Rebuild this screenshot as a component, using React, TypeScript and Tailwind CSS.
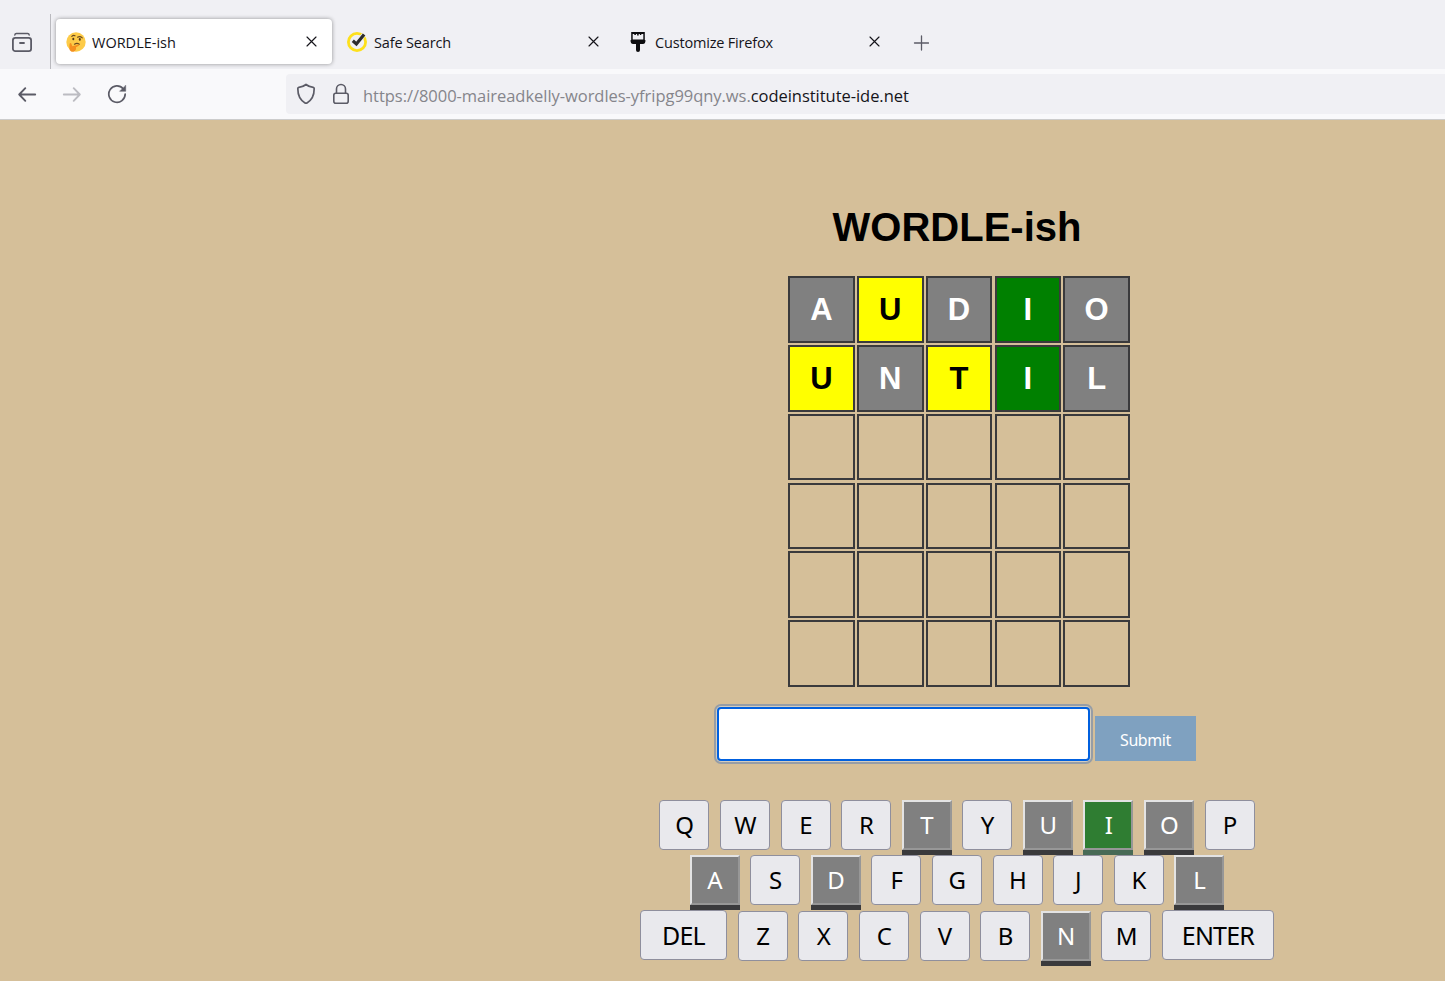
import React from "react";

type Mark = "miss" | "near" | "hit" | "empty";

const rows: [string, Mark][][] = [
  [["A", "miss"], ["U", "near"], ["D", "miss"], ["I", "hit"], ["O", "miss"]],
  [["U", "near"], ["N", "miss"], ["T", "near"], ["I", "hit"], ["L", "miss"]],
  ...Array.from({ length: 4 }, () => Array.from({ length: 5 }, () => ["", "empty"] as [string, Mark])),
];

const tileStyle: Record<Mark, string> = {
  miss: "bg-[#808080] text-white",
  near: "bg-[#ffff00] text-black",
  hit: "bg-[#008000] text-white",
  empty: "",
};

const used = new Set(["T", "U", "O", "A", "D", "L", "N"]);

function Key({ k }: { k: string }) {
  const base = "flex h-[50px] w-[50px] shrink-0 items-center justify-center text-[24px] leading-none font-['Noto_Sans',sans-serif] pl-[0.6px] ";
  if (k === "I")
    return (
      <button className={base + "border-2 border-t-[#e3e3e3] border-l-[#e3e3e3] border-r-[#979797] border-b-[#979797] bg-[#2f7d32] text-white shadow-[0_5px_0_#486a56]"}>
        <span>I</span>
      </button>
    );
  if (used.has(k))
    return (
      <button className={base + "border-2 border-t-[#e3e3e3] border-l-[#e3e3e3] border-r-[#979797] border-b-[#979797] bg-[#808080] text-white shadow-[0_5px_0_#3a3a3c]"}>
        <span>{k}</span>
      </button>
    );
  return (
    <button className={base + "rounded-[4px] border border-[#8f8f9d] bg-[#e9e9ed] text-black"}>
      <span>{k}</span>
    </button>
  );
}

function Close() {
  return (
    <svg width="12" height="12" viewBox="0 0 12 12" className="shrink-0" fill="none" stroke="#15141a" strokeWidth="1.15" strokeLinecap="round">
      <path d="M2 1l9 9M11 1l-9 9" />
    </svg>
  );
}

function Browser() {
  return (
    <header className="font-['Open_Sans','Noto_Sans',sans-serif] text-[#15141a]">
      <div className="flex h-[69px] bg-[#f0f0f4]">
        <div className="mt-[14px] flex h-[55px] w-[51px] border-r border-[#b9b9be] pl-[11px] pt-[18px]">
          <svg width="22" height="22" viewBox="0 0 22 22" fill="none" stroke="#5b5b66" strokeWidth="1.8" strokeLinecap="round">
            <path d="M3.8 3Q4 1.6 5.4 1.6h11.2Q18 1.6 18.2 3" strokeWidth="1.5" />
            <rect x="1.9" y="5.9" width="18.2" height="13.2" rx="2.4" />
            <path d="M9 11h4" />
          </svg>
        </div>
        <div className="ml-[5px] mt-[19px] flex h-[45px] w-[276px] items-center rounded-[4px] bg-white pl-[10px] pr-[15px] shadow-[0_0_4px_rgba(0,0,0,0.4)]">
          <svg width="20" height="20" viewBox="0 0 20 20" className="shrink-0">
            <circle cx="10" cy="10" r="9.7" fill="#fdcb48" />
            <path d="M5.8 4.4Q7.5 2.8 9 3.8M11.5 5.2Q14 3.9 16.3 5.8" fill="none" stroke="#6b4a20" strokeWidth="1.1" strokeLinecap="round" />
            <ellipse cx="7.3" cy="7" rx="1" ry="1.3" fill="#543a1a" />
            <ellipse cx="13.8" cy="7.4" rx="1" ry="1.3" fill="#543a1a" />
            <path d="M8.5 12.2Q11 10.6 13.3 12.2" fill="none" stroke="#6b4a20" strokeWidth="1.2" strokeLinecap="round" />
            <path d="M3.4 13.2Q3.2 10.8 5 11L6.4 14.2 12.6 12.4Q14 12.9 12.4 14L10 15.3Q10.6 18.6 7.5 19.8 4 20 3.4 17z" fill="#f5901f" />
          </svg>
          <span className="ml-[6px] flex-1 whitespace-nowrap pt-[2px] text-[14.5px]">WORDLE-ish</span>
          <Close />
        </div>
        <div className="mt-[19px] flex h-[45px] w-[281px] items-center pl-[15px] pr-[14px]">
          <svg width="20" height="20" viewBox="0 0 20 20" className="shrink-0" fill="none">
            <circle cx="10" cy="10" r="8.6" stroke="#fde01c" strokeWidth="2.8" />
            <path d="M5.8 8.8l3.6 3.7 7-9.5" stroke="#f0f0f4" strokeWidth="4.5" />
            <path d="M5.8 8.8l3.6 3.2 7.7-9.5" stroke="#2c2c2e" strokeWidth="3.2" />
          </svg>
          <span className="ml-[7px] flex-1 whitespace-nowrap pt-[2px] text-[14.5px] tracking-[-0.15px]">Safe Search</span>
          <Close />
        </div>
        <div className="mt-[19px] flex h-[45px] w-[281px] items-center pl-[15px] pr-[14px]">
          <svg width="20" height="20" viewBox="0 0 20 20" className="shrink-0">
            <path d="M3.2 0h13.6v9H3.2z" fill="#0c0c0f" />
            <path d="M4.7 2h1.6v1h1.6V2h1.2v1.6h1.6V2h1.2v1h1.4V2h2V7.4H4.7z" fill="#f0f0f4" />
            <path d="M2.6 8h14.8v1.6q0 2.4-2.2 2.4h-3.2v6q0 2-2 2t-2-2v-6H4.8q-2.2 0-2.2-2.4z" fill="#0c0c0f" />
          </svg>
          <span className="ml-[7px] flex-1 whitespace-nowrap pt-[2px] text-[14.5px] tracking-[-0.18px]">Customize Firefox</span>
          <Close />
        </div>
        <svg width="16" height="16" viewBox="0 0 16 16" className="ml-[19px] mt-[35px]" fill="none" stroke="#5b5b66" strokeWidth="1.3" strokeLinecap="round">
          <path d="M8.5 1v14M1.5 8h14" />
        </svg>
      </div>
      <div className="flex h-[51px] items-center border-b border-[#cccccc] bg-[#f9f9fb]">
        <div className="flex w-[286px] items-center pl-[17px]">
          <svg width="20" height="20" viewBox="0 0 20 20" fill="none" stroke="#5b5b66" strokeWidth="1.9" strokeLinecap="round" strokeLinejoin="round">
            <path d="M18.2 10.5H2.2M8.3 4.2L2.2 10.5l6.1 6.3" />
          </svg>
          <svg width="20" height="20" viewBox="0 0 20 20" className="ml-[25px]" fill="none" stroke="#bcbcc2" strokeWidth="1.9" strokeLinecap="round" strokeLinejoin="round">
            <path d="M1.8 10.5H17.8M11.7 4.2L17.8 10.5l-6.1 6.3" />
          </svg>
          <svg width="20" height="20" viewBox="0 0 20 20" className="ml-[25px]" fill="none" stroke="#5b5b66" strokeWidth="1.7" strokeLinecap="round">
            <path d="M16.2 4.7A8.2 8.2 0 1 0 18.2 10" />
            <path d="M18.7 1.5v5.8h-5.8z" fill="#5b5b66" strokeWidth=".5" />
          </svg>
        </div>
        <div className="flex h-[40px] flex-1 items-center rounded-l-[4px] bg-[#f0f0f4] pl-[10px]">
          <svg width="20" height="22" viewBox="0 0 20 22" fill="none" stroke="#5b5b66" strokeWidth="1.7" strokeLinejoin="round">
            <path d="M10 1.5Q13 4 17.2 4.4Q18.2 4.6 18.2 5.6C18.2 12 16.3 17 11 19.9Q10 20.4 9 19.9C3.7 17 1.8 12 1.8 5.6Q1.8 4.6 2.8 4.4Q7 4 10 1.5z" />
          </svg>
          <svg width="18" height="22" viewBox="0 0 18 22" className="ml-[16px]" fill="none" stroke="#5b5b66" strokeWidth="1.6">
            <rect x="1.8" y="10.2" width="14.4" height="10" rx="2" />
            <path d="M4.5 10V6a4.5 4.5 0 0 1 9 0v4" />
          </svg>
          <span className="ml-[13px] whitespace-nowrap pt-[4px] text-[16.5px] tracking-[-0.04px] text-[#85858b]">
            https://8000-maireadkelly-wordles-yfripg99qny.ws.<span className="text-[#15141a]">codeinstitute-ide.net</span>
          </span>
        </div>
      </div>
    </header>
  );
}

export default function App() {
  return (
    <div className="h-[981px] w-[1445px] overflow-hidden bg-[#d5bf99]">
      <Browser />
      <main className="ml-[469px] flex flex-col">
        <h1 className="mt-[84px] flex h-[46px] w-[976px] items-center justify-center font-['Liberation_Sans',Arial,sans-serif] text-[40px] font-bold leading-[46px] text-black">
          WORDLE-ish
        </h1>
        <div className="ml-[319.2px] mt-[26.2px] grid w-fit grid-cols-[repeat(5,66.6px)] gap-[2.2px]">
          {rows.flat().map(([ch, m], i) => (
            <div key={i} className={"flex h-[66.6px] items-center justify-center border-2 border-[#3a3a3c] font-['Liberation_Sans',Arial,sans-serif] text-[31px] font-bold leading-none " + tileStyle[m]}>
              {ch}
            </div>
          ))}
        </div>
        <form className="ml-[248px] mt-[20.2px] flex h-[54px] items-end">
          <input aria-label="Guess" className="h-[54px] w-[373px] rounded-[4px] border-2 border-[#0060df] bg-white shadow-[0_0_0_1px_#d5cdbd,0_0_0_3px_#969da6] outline-none" />
          <button type="button" className="ml-[5px] h-[45px] w-[101px] bg-[#7fa1c0] pt-[3px] font-['Noto_Sans',sans-serif] text-[16px] tracking-[-0.4px] text-white">
            Submit
          </button>
        </form>
        <div className="ml-[190.45px] mt-[39px] flex h-[55px] gap-[10.58px]">
          {"QWERTYUIOP".split("").map((k) => <Key key={k} k={k} />)}
        </div>
        <div className="ml-[220.7px] flex h-[55px] gap-[10.57px]">
          {"ASDFGHJKL".split("").map((k) => <Key key={k} k={k} />)}
        </div>
        <div className="ml-[171px] flex">
          <button className="h-[50px] w-[87px] rounded-[4px] border border-[#8f8f9d] bg-[#e9e9ed] pt-[2px] font-['Noto_Sans',sans-serif] text-[25px] leading-none tracking-[-0.8px] text-black">DEL</button>
          <div className="ml-[10.9px] mt-px flex gap-[10.57px]">
            {"ZXCVBNM".split("").map((k) => <Key key={k} k={k} />)}
          </div>
          <button className="ml-[10.7px] h-[50px] w-[112px] rounded-[4px] border border-[#8f8f9d] bg-[#e9e9ed] pt-[2px] font-['Noto_Sans',sans-serif] text-[25px] leading-none tracking-[-0.8px] text-black">ENTER</button>
        </div>
      </main>
    </div>
  );
}
